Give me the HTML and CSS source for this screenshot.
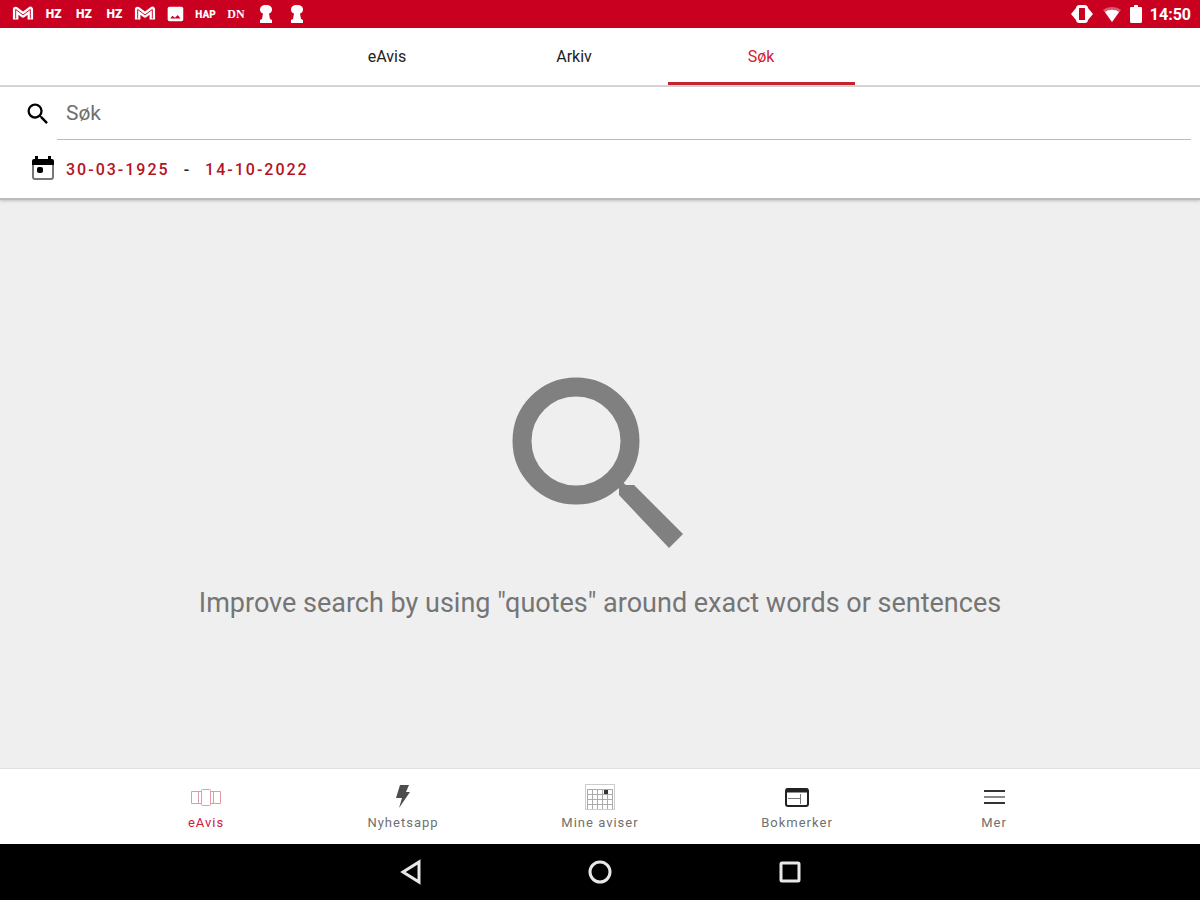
FILE: index.html
```html
<!DOCTYPE html>
<html lang="no">
<head>
  <meta charset="UTF-8">
  <meta name="viewport" content="width=device-width, initial-scale=1.0">
  <title>eAvis - Søk</title>
  <link rel="stylesheet" href="styles.css">
</head>
<body>
  <div class="statusbar">
    <div class="notifications">
      <svg viewBox="0 0 24 16"><path d="M4 14V3l8 6 8-6v11" fill="none" stroke="#fff" stroke-width="6" stroke-linejoin="round"/><path d="M4 13V3l8 6 8-6v10" fill="none" stroke="#c9001f" stroke-width="1"/></svg>
      <span>HZ</span>
      <span>HZ</span>
      <span>HZ</span>
      <svg viewBox="0 0 24 16"><path d="M4 14V3l8 6 8-6v11" fill="none" stroke="#fff" stroke-width="6" stroke-linejoin="round"/><path d="M4 13V3l8 6 8-6v10" fill="none" stroke="#c9001f" stroke-width="1"/></svg>
      <svg viewBox="0 0 24 16"><rect x="4" y="0" width="17" height="16" rx="2" fill="#fff"/><path d="M7 13l2-3 3 2 3-3 3 4z" fill="#c9001f"/></svg>
      <span class="small">HAP</span>
      <span class="serif">DN</span>
      <svg class="tall" viewBox="0 0 24 20"><path d="M12 1c4 0 6 2 6 4.500 0 2-1 3.500-3 4L16 15l2 1v3H6v-3l2-1 1-5.500c-2-.5-3-2-3-4C6 3 8 1 12 1z" fill="#fff"/></svg>
      <svg class="tall" viewBox="0 0 24 20"><path d="M12 1c4 0 6 2 6 4.500 0 2-1 3.500-3 4L16 15l2 1v3H6v-3l2-1 1-5.500c-2-.5-3-2-3-4C6 3 8 1 12 1z" fill="#fff"/></svg>
    </div>
    <div class="system">
      <svg width="24" height="20" viewBox="0 0 24 20"><rect x="7.500" y="2.500" width="9" height="15" rx="2" fill="none" stroke="#fff" stroke-width="3"/><path d="M6 4v12L1 10zM18 4v12l5-6z" fill="#fff"/></svg>
      <svg width="20" height="20" viewBox="0 0 20 20"><path d="M1 6c5-4 13-4 18 0l-9 12z" fill="#fff" opacity=".35"/><path d="M3 8c4-3 10-3 14 0l-7 10z" fill="#fff"/></svg>
      <svg width="12" height="20" viewBox="0 0 12 20"><path d="M4 1h4v2h3q1 0 1 1v13q0 2-1 2H1q-1 0-1-2V4q0-1 1-1h3z" fill="#fff"/></svg>
      <span class="clock">14:50</span>
    </div>
  </div>

  <nav class="tabs">
    <button>eAvis</button>
    <button>Arkiv</button>
    <button class="active">Søk</button>
  </nav>

  <div class="search">
    <div class="search-row">
      <label for="sok" aria-label="Søk">
        <svg width="28" height="28" viewBox="0 0 24 24"><path d="M15.500 14h-.79l-.28-.27A6.471 6.471 0 0 0 16 9.500 6.500 6.500 0 1 0 9.500 16c1.610 0 3.090-.59 4.230-1.570l.27.280v.79l5 4.990L20.490 19l-4.990-5zm-6 0C7.010 14 5 11.990 5 9.500S7.010 5 9.500 5 14 7.010 14 9.500 11.990 14 9.500 14z"/></svg>
      </label>
      <input type="text" id="sok" placeholder="Søk">
    </div>
    <div class="date-row">
      <svg width="28" height="28" viewBox="0 0 28 28"><path d="M5 9v13q0 2 2 2h16q2 0 2-2V9" fill="none" stroke="#777" stroke-width="2"/><path d="M4 10V6q0-2 2-2h1V1h3v3h10V1h3v3h1q2 0 2 2v4z"/><rect x="9" y="12" width="6" height="6" rx="2"/></svg>
      <button>30-03-1925</button>
      <span>-</span>
      <button>14-10-2022</button>
    </div>
  </div>

  <main class="empty">
    <svg width="176" height="172" viewBox="0 0 176 172"><circle cx="64" cy="64" r="54" fill="none" stroke="#808080" stroke-width="19"/><path d="M106 104l-3 3 4 5v6l50 53 14-14-49-49h-8l-5-4z" fill="#808080"/></svg>
    <p>Improve search by using "quotes" around exact words or sentences</p>
  </main>

  <nav class="bottom-nav">
    <button class="active">
      <svg width="30" height="28" viewBox="0 0 30 28" fill="none" stroke="#e39aa5"><path d="M10 8.500H.5v12H10M20 8.500h9.500v12H20M7.500 9v11M22.500 9v11"/><rect x="10.500" y="6.500" width="9" height="16" rx="1"/></svg>
      <span>eAvis</span>
    </button>
    <button>
      <svg width="30" height="28" viewBox="0 0 30 28"><path d="M12 2h9l-3 7h4L11 25l3-10H8z" fill="#4d4d4d"/></svg>
      <span>Nyhetsapp</span>
    </button>
    <button>
      <svg width="30" height="28" viewBox="0 0 30 28" fill="none" stroke="#aaa"><rect x=".5" y="1.500" width="29" height="25" stroke="#ccc"/><path d="M2 6.500h26M2 11.500h26M2 16.500h26M2 21.500h26M2.500 6v20M7.500 6v20M12.500 6v20M17.500 6v20M22.500 6v20M27.500 6v20"/><rect x="19" y="7" width="4" height="4" fill="#333" stroke="none"/></svg>
      <span>Mine aviser</span>
    </button>
    <button>
      <svg width="30" height="28" viewBox="0 0 30 28" fill="none"><rect x="4" y="6" width="22" height="17" rx="2" stroke="#222" stroke-width="2"/><path d="M4 7.500h22" stroke="#222" stroke-width="4"/><path d="M6 15.500h12M18.500 11v10" stroke="#777"/></svg>
      <span>Bokmerker</span>
    </button>
    <button>
      <svg width="30" height="28" viewBox="0 0 30 28"><path d="M5 7h21v2H5zM5 19h21v2H5z" fill="#333"/><path d="M5 13h21v2H5z" fill="#888"/></svg>
      <span>Mer</span>
    </button>
  </nav>

  <div class="android-nav">
    <button aria-label="Tilbake"><svg width="28" height="28" viewBox="0 0 28 28"><path d="M23 4v20L7 14z"/></svg></button>
    <button aria-label="Hjem"><svg width="28" height="28" viewBox="0 0 28 28"><circle cx="14" cy="14" r="10"/></svg></button>
    <button aria-label="Oversikt"><svg width="28" height="28" viewBox="0 0 28 28"><rect x="5" y="5" width="18" height="18" rx="1"/></svg></button>
  </div>
</body>
</html>
```
FILE: styles.css
```css
* {
  box-sizing: border-box;
}
body {
  margin: 0;
  min-height: 100vh;
  display: flex;
  flex-direction: column;
  font-family: Roboto, sans-serif;
  background-color: #efefef;
  color: #222;
}
button {
  background: none;
  border: none;
  padding: 0;
  font-family: inherit;
  cursor: pointer;
}
svg {
  display: block;
}

.statusbar {
  height: 28px;
  display: flex;
  justify-content: space-between;
  align-items: center;
  padding: 0 9px 0 8px;
  background-color: #c9001f;
  color: #fff;
}
.notifications {
  display: grid;
  grid-template-columns: repeat(10, 1fr);
  width: 304px;
  align-items: center;
  justify-items: center;
  font-size: 12px;
  font-weight: 900;
}
.notifications svg {
  width: 22px;
  height: 16px;
}
.notifications .tall {
  width: 24px;
  height: 20px;
}
.notifications .small {
  font-size: 10px;
}
.notifications .serif {
  font-family: "Liberation Serif", serif;
}
.system {
  display: flex;
  align-items: center;
  gap: 8px;
}
.clock {
  font-size: 16px;
  font-weight: 700;
}

.tabs {
  display: flex;
  justify-content: center;
  height: 59px;
  padding-right: 52px;
  background-color: #fff;
  border-bottom: 2px solid #d8d8d8;
}
.tabs button {
  width: 187px;
  font-size: 16px;
  color: #222;
  border-top: 3px solid transparent;
  border-bottom: 3px solid transparent;
}
.tabs .active {
  color: #d32035;
  border-bottom-color: #c4232f;
}

.search {
  position: relative;
  background-color: #fff;
  border-bottom: 2px solid #bbb;
  box-shadow: 0 1px 3px rgba(0, 0, 0, 0.2);
}
.search-row {
  display: flex;
  align-items: center;
  padding: 0 9px 0 24px;
}
.search-row label {
  width: 33px;
}
.search-row input {
  flex: 1;
  height: 53px;
  padding: 0 9px;
  border: none;
  border-bottom: 1px solid #bbb;
  outline: none;
  font-family: inherit;
  font-size: 21px;
  color: #222;
}
.search-row input::placeholder {
  color: #707070;
}
.date-row {
  display: flex;
  align-items: center;
  height: 58px;
  padding: 0 28px;
}
.date-row svg {
  margin-right: 10px;
}
.date-row button,
.date-row span {
  font-size: 16px;
  font-weight: 500;
  letter-spacing: 2px;
}
.date-row button {
  color: #b5121f;
}
.date-row span {
  margin: 0 14px;
}

.empty {
  flex: 1;
  display: flex;
  flex-direction: column;
  align-items: center;
  justify-content: center;
  padding: 30px 16px 0;
}
.empty p {
  margin: 36px 0 0;
  font-size: 27px;
  line-height: 36px;
  text-align: center;
  color: #757575;
}

.bottom-nav {
  display: flex;
  justify-content: center;
  height: 76px;
  background-color: #fff;
  border-top: 1px solid #e0e0e0;
}
.bottom-nav button {
  flex: 0 1 197px;
  display: flex;
  flex-direction: column;
  align-items: center;
  padding-top: 14px;
  gap: 4px;
  font-size: 13px;
  letter-spacing: 1px;
  color: #707070;
}
.bottom-nav .active {
  color: #cf2038;
}

.android-nav {
  display: flex;
  justify-content: center;
  gap: 162px;
  height: 56px;
  background-color: #000;
}
.android-nav svg {
  fill: none;
  stroke: #e8e8e8;
  stroke-width: 3;
}
```
